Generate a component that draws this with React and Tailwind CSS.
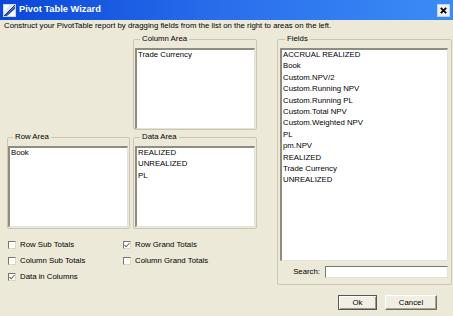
import React from "react";

const font = { fontFamily: '"Liberation Sans", Arial, sans-serif' };

const GroupBox = ({ title, className = "", children }) => (
    <fieldset className={`border border-[#c9c6b6] rounded-[2px] min-w-0 ${className}`}>
        <legend className="ml-[5px] px-[2px] text-[7.8px] leading-[10px] text-black">{title}</legend>
        {children}
    </fieldset>
);

const ListBox = ({ items, className = "" }) => (
    <div
        className={`bg-white border-t-2 border-l-2 border-r border-b border-t-[#8f8d80] border-l-[#8f8d80] border-r-[#e4e2d6] border-b-[#e4e2d6] pl-[1px] ${className}`}
    >
        <div className="-mt-[1px]">
            {items.map((it) => (
                <div key={it} className="text-[7.8px] leading-[11.4px] text-black whitespace-nowrap">
                    {it}
                </div>
            ))}
        </div>
    </div>
);

const Checkbox = ({ label, checked }) => (
    <div className="flex items-center h-4 gap-[4px]">
        <div className="w-[8px] h-[8px] bg-white border-t border-l border-r border-b border-t-[#7a786c] border-l-[#7a786c] border-r-[#d8d6ca] border-b-[#d8d6ca] flex items-center justify-center">
            {checked && (
                <svg width="6" height="6" viewBox="0 0 6 6">
                    <polyline points="0.5,3 2.2,4.8 5.5,1" fill="none" stroke="#6b6b6b" strokeWidth="1.1" />
                </svg>
            )}
        </div>
        <span className="text-[7.8px] text-black leading-none">{label}</span>
    </div>
);

export default function App() {
    const fields = [
        "ACCRUAL REALIZED",
        "Book",
        "Custom.NPV/2",
        "Custom.Running NPV",
        "Custom.Running PL",
        "Custom.Total NPV",
        "Custom.Weighted NPV",
        "PL",
        "pm.NPV",
        "REALIZED",
        "Trade Currency",
        "UNREALIZED",
    ];

    return (
        <div className="w-[453px] h-[316px] bg-[#ece9d8] overflow-hidden flex flex-col" style={font}>
            {/* Title bar */}
            <div className="h-[20px] flex items-center bg-gradient-to-r from-[#0a46d8] via-[#2a6eec] to-[#3b8cf6] pl-[3px] pr-[3px]">
                <svg width="13" height="13" viewBox="0 0 13 13">
                    <rect x="0.5" y="0.5" width="12" height="12" fill="#ffffff" stroke="#c8d6f0" />
                    <polygon points="1,12 1,7 7,1 12,1" fill="#dfe8f7" />
                    <polygon points="1,12 12,2 12,5 4,12" fill="#2a55b8" />
                    <line x1="1" y1="12" x2="12" y2="1" stroke="#0c2f8c" strokeWidth="1" />
                </svg>
                <span className="ml-[3px] text-white font-bold text-[9.3px]">Pivot Table Wizard</span>
                <div className="ml-auto w-[13px] h-[13px] bg-[#eeeeee] border border-[#c7d3e8] flex items-center justify-center">
                    <svg width="7" height="7" viewBox="0 0 7 7">
                        <path d="M0.8 0.8 L6.2 6.2 M6.2 0.8 L0.8 6.2" stroke="#000" strokeWidth="1.8" />
                    </svg>
                </div>
            </div>

            {/* Instruction */}
            <div className="pl-[4px] h-[11px] text-[7.8px] leading-[11px] text-black whitespace-nowrap">
                Construct your PivotTable report by dragging fields from the list on the right to areas on the left.
            </div>

            {/* Main */}
            <div className="flex mt-[3px] pl-[7px]">
                <div className="flex flex-col w-[250px]">
                    <div className="grid grid-cols-[123px_124px] gap-x-[3px] gap-y-[2px]">
                        <div />
                        <GroupBox title="Column Area" className="px-[1px] pb-0">
                            <ListBox items={["Trade Currency"]} className="mt-[4px] h-[81px]" />
                        </GroupBox>
                        <GroupBox title="Row Area" className="pl-0 pr-[1px] pb-[1px]">
                            <ListBox items={["Book"]} className="mt-[4px] h-[81px]" />
                        </GroupBox>
                        <GroupBox title="Data Area" className="px-[1px] pb-[1px]">
                            <ListBox items={["REALIZED", "UNREALIZED", "PL"]} className="mt-[4px] h-[81px]" />
                        </GroupBox>
                    </div>

                    <div className="grid grid-cols-[115px_1fr] mt-[8px] pl-[1px]">
                        <Checkbox label="Row Sub Totals" />
                        <Checkbox label="Row Grand Totals" checked />
                        <Checkbox label="Column Sub Totals" />
                        <Checkbox label="Column Grand Totals" />
                        <Checkbox label="Data in Columns" checked />
                    </div>
                </div>

                <GroupBox title="Fields" className="ml-[20px] w-[175px] pl-[2px] pr-[3px] pb-[5px]">
                    <ListBox items={fields} className="mt-[4px] h-[213px]" />
                    <div className="flex items-center mt-[5px]">
                        <span className="w-[45px] text-right pr-[5px] text-[7.8px] text-black">Search:</span>
                        <div className="flex-1 h-[12px] bg-white border-t border-l border-r border-b border-t-[#7a786c] border-l-[#7a786c] border-r-[#e4e2d6] border-b-[#e4e2d6]" />
                    </div>
                </GroupBox>
            </div>

            {/* Buttons */}
            <div className="flex justify-end gap-[8px] pr-[16px] mt-[10px]">
                <button className="w-[39px] h-[15px] bg-[#f1efe4] border border-[#555555] shadow-[inset_1px_1px_0_#ffffff,inset_-1px_-1px_0_#9a988c] text-[7.8px] text-black leading-none">
                    Ok
                </button>
                <button className="w-[52px] h-[15px] bg-[#f1efe4] border-t border-l border-r border-b border-t-[#ffffff] border-l-[#ffffff] border-r-[#6f6d62] border-b-[#6f6d62] shadow-[inset_-1px_-1px_0_#a9a79a] text-[7.8px] text-black leading-none">
                    Cancel
                </button>
            </div>
        </div>
    );
}
